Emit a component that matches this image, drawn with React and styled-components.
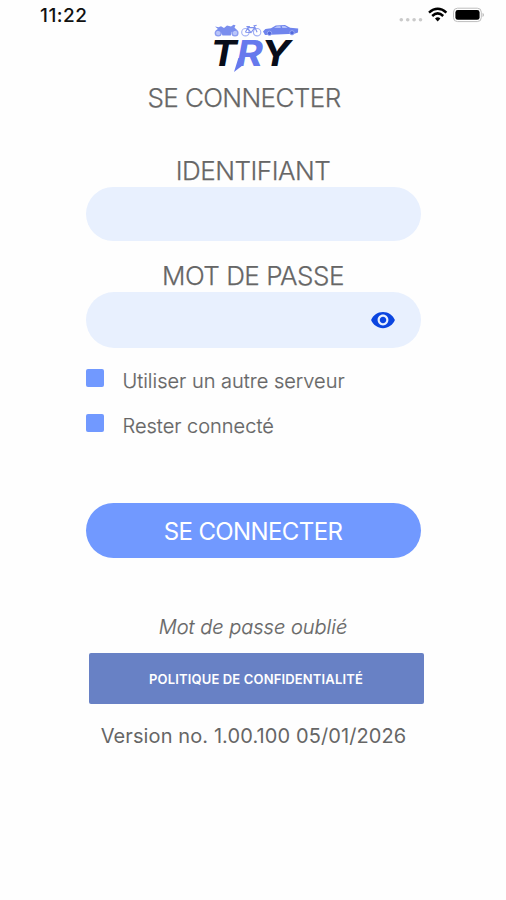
import styled, { createGlobalStyle } from "styled-components";

export default function App(){
    return(
        <>
            <GlobalStyle />
            <Screen>
                <StatusBar>
                    <Clock>11:22</Clock>
                    <StatusIcons />
                </StatusBar>
                <Logo />
                <Title $spacing="-0.6px">SE CONNECTER</Title>
                <Form>
                    <FieldLabel htmlFor="login" $spacing="-0.5px">IDENTIFIANT</FieldLabel>
                    <Field $height="54px">
                        <Input id="login" type="text" />
                    </Field>
                    <FieldLabel htmlFor="password" $top="19px" $spacing="-0.5px">MOT DE PASSE</FieldLabel>
                    <Field $height="56px">
                        <Input id="password" type="password" />
                        <EyeIcon />
                    </Field>
                    <Options>
                        <Option><Box /><OptionText>Utiliser un autre serveur</OptionText></Option>
                        <Option><Box /><OptionText>Rester connecté</OptionText></Option>
                    </Options>
                    <SubmitButton type="button">SE CONNECTER</SubmitButton>
                </Form>
                <Forgot>Mot de passe oublié</Forgot>
                <PolicyButton type="button">POLITIQUE DE CONFIDENTIALITÉ</PolicyButton>
                <Version>Version no. 1.00.100 05/01/2026</Version>
            </Screen>
        </>
    );
}

function StatusIcons(){
    return(
        <svg width="88" height="18" viewBox="0 0 88 18">
            <g fill="#cacaca">
                <circle cx="3.3" cy="13.7" r="1.8"/>
                <circle cx="9.7" cy="13.7" r="1.8"/>
                <circle cx="16.1" cy="13.7" r="1.8"/>
                <circle cx="22.5" cy="13.7" r="1.8"/>
            </g>
            <g fill="none" stroke="#000" strokeWidth="2.5">
                <path d="M31 6.6Q39.7 -1 48.4 6.6"/>
                <path d="M34.2 10Q39.7 4.8 45.2 10"/>
            </g>
            <path d="M37 12.4Q39.7 10 42.4 12.4L39.7 15.4Z" fill="#000"/>
            <rect x="55.5" y="2.2" width="27.8" height="13.4" rx="4" fill="#fff" stroke="#bdbdbd"/>
            <rect x="57.4" y="4" width="24.2" height="9.8" rx="2.4" fill="#000"/>
            <path d="M84.6 6.8Q87 9 84.6 11.2Z" fill="#a8a8a8"/>
        </svg>
    );
}

function Logo(){
    return(
        <LogoBox>
            <svg width="92" height="52" viewBox="0 0 92 52">
                <g fill="#b9c5fa" stroke="#8b9cf0" strokeWidth="1.4">
                    <circle cx="8.2" cy="9" r="2.9"/>
                    <circle cx="25" cy="9" r="2.9"/>
                </g>
                <path d="M5 2.6L8.5 3.2L11 2.2L14 4L17 1.6L21 2.6L23.5 .8L25.5 1.2L24.5 3.6L27 6L21.5 8L20.8 11.5L12.5 11.5L10.5 7.5L5.8 6.5L8 5Z" fill="#7a8eee"/>
                <g fill="none" stroke="#a3b1f4" strokeWidth="1.1">
                    <circle cx="35.4" cy="8.2" r="3.7"/>
                    <circle cx="47.1" cy="8.2" r="3.7"/>
                    <path d="M35.4 8.2L38 3.6L44.8 3.6L41 8.5L37.4 3.8M41 8.5L35.4 8.2M47.1 8.2L44.1 1.7L46.6 1.4M36.4 2.6H39.9" stroke="#7f91ed"/>
                </g>
                <path d="M53 7.4L55.4 5L61 4.2L65.8 1.5L75 1L80.2 3.8L88.2 4.4L88 8.4L84.5 9.8L55 11Z" fill="#6f84ed"/>
                <path d="M64 4L66.8 2.3L70.3 2L70.8 4ZM71.8 2L75 2.1L77.6 4L72.3 4Z" fill="#b4c1fa"/>
                <g fill="#5269dc" stroke="#a5b4f8" strokeWidth=".8">
                    <circle cx="59.5" cy="9.3" r="2.2"/>
                    <circle cx="82" cy="8.8" r="2.2"/>
                </g>
                <LogoText transform="translate(.6 41.7) scale(1.1 1)" fill="#080d19">T</LogoText>
                <LogoText transform="translate(26.6 41.7) scale(1.12 1)" fill="#6679ed">R</LogoText>
                <LogoText transform="translate(51.2 41.7) scale(1.13 1)" fill="#080d19">Y</LogoText>
                <path d="M28.4 34L33.4 34L32.1 41.7L24 48Z" fill="#6679ed"/>
            </svg>
        </LogoBox>
    );
}

function EyeIcon(){
    return(
        <svg width="26" height="26" viewBox="0 0 24 24">
            <path fill="#0b45e0" d="M12 4.5C7 4.5 2.73 7.61 1 12c1.73 4.39 6 7.5 11 7.5s9.27-3.11 11-7.5c-1.73-4.39-6-7.5-11-7.5zM12 17c-2.76 0-5-2.24-5-5s2.24-5 5-5 5 2.24 5 5-2.24 5-5 5zm0-8c-1.66 0-3 1.34-3 3s1.34 3 3 3 3-1.34 3-3-1.34-3-3-3z"/>
        </svg>
    );
}

const GlobalStyle = createGlobalStyle`
    *{
        box-sizing: border-box;
    }
    body{
        margin: 0;
        background-color: #fefefe;
        font-family: Inter, "Liberation Sans", sans-serif;
        color: #666;
    }
    button, input{
        font-family: inherit;
        border: none;
    }
`;

const Screen = styled.div`
    width: 506px;
    height: 900px;
    display: flex;
    flex-direction: column;
    align-items: center;
`;

const StatusBar = styled.div`
    width: 100%;
    height: 24px;
    padding: 6px 20px 0 40px;
    display: flex;
    justify-content: space-between;
    align-items: flex-start;
`;

const Clock = styled.div`
    color: #111;
    font-size: 19px;
    line-height: 19px;
    font-weight: 500;
    letter-spacing: 0.5px;
`;

const LogoBox = styled.div`
    width: 92px;
    height: 52px;
    margin-left: 5px;
`;

const LogoText = styled.text`
    font-size: 36px;
    font-weight: 700;
    font-style: italic;
`;

const Title = styled.div`
    margin: 6px 18px 0 0;
    font-size: 26px;
    line-height: 32px;
    font-weight: 300;
    -webkit-text-stroke: 0.25px #666;
    letter-spacing: ${props => props.$spacing};
`;

const Form = styled.div`
    width: 335px;
    margin-top: 41px;
    display: flex;
    flex-direction: column;
`;

const FieldLabel = styled.label`
    margin-top: ${props => props.$top || "0"};
    height: 32px;
    text-align: center;
    font-size: 26px;
    line-height: 32px;
    font-weight: 300;
    -webkit-text-stroke: 0.25px #666;
    letter-spacing: ${props => props.$spacing};
    white-space: nowrap;
`;

const Field = styled.div`
    height: ${props => props.$height};
    padding: 0 25px;
    display: flex;
    align-items: center;
    border-radius: 28px;
    background-color: #e8f0fe;
`;

const Input = styled.input`
    flex: 1;
    min-width: 0;
    background: transparent;
    outline: none;
    font-size: 20px;
`;

const Options = styled.div`
    margin-top: 20px;
    display: flex;
    flex-direction: column;
    gap: 21px;
`;

const Option = styled.div`
    height: 24px;
    display: flex;
    align-items: flex-start;
    gap: 19px;
`;

const Box = styled.div`
    width: 18px;
    height: 18px;
    margin-top: 1px;
    border-radius: 2px;
    background-color: #7199ff;
`;

const OptionText = styled.div`
    font-size: 20px;
    line-height: 26px;
    font-weight: 300;
    -webkit-text-stroke: 0.2px #666;
`;

const SubmitButton = styled.button`
    height: 55px;
    margin-top: 66px;
    padding-top: 2px;
    border-radius: 28px;
    background-color: #7199ff;
    color: white;
    font-size: 24px;
    font-weight: 400;
    letter-spacing: -0.6px;
`;

const Forgot = styled.div`
    margin-top: 56px;
    font-size: 20px;
    line-height: 26px;
    font-weight: 300;
    -webkit-text-stroke: 0.2px #666;
    font-style: italic;
`;

const PolicyButton = styled.button`
    width: 335px;
    height: 51px;
    margin: 13px 0 0 6px;
    border-radius: 2px;
    background-color: #6881c5;
    color: white;
    font-size: 13px;
    font-weight: 600;
    letter-spacing: 0.15px;
`;

const Version = styled.div`
    margin: 19px 0 0 1px;
    font-size: 20px;
    line-height: 26px;
    font-weight: 400;
    letter-spacing: 0.1px;
`;
